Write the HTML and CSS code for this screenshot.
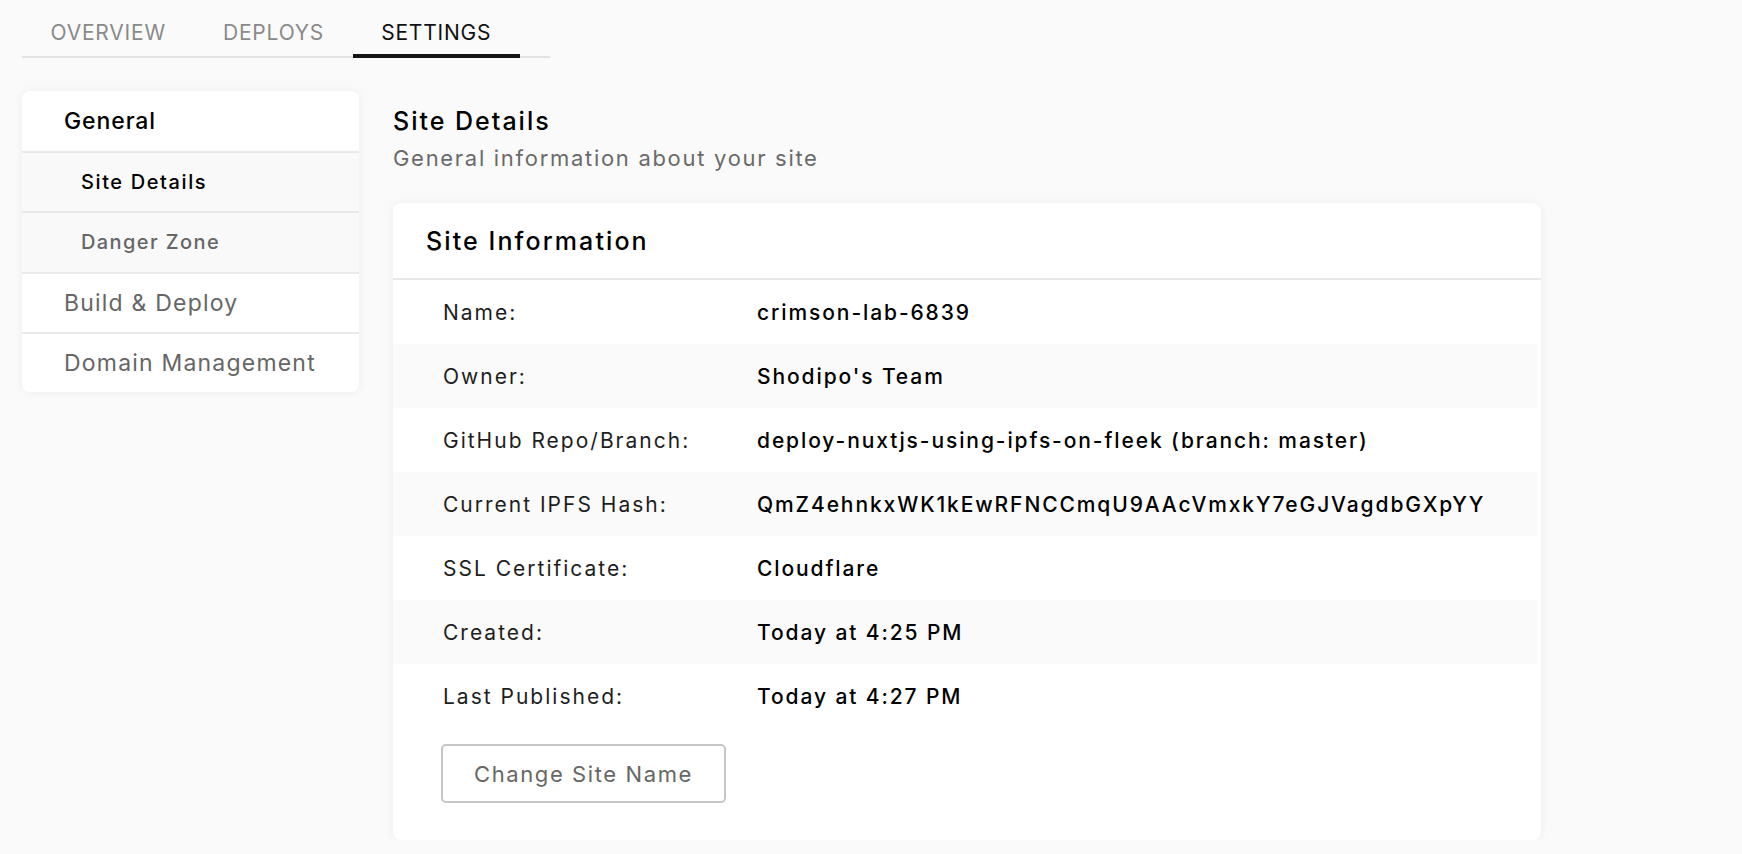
FILE: index.html
```html
<!DOCTYPE html>
<html lang="en">
<head>
<meta charset="utf-8">
<title>Site Settings</title>
<link rel="stylesheet" href="styles.css">
</head>
<body>
<div class="page">
  <nav class="tabs">
    <div class="tab">OVERVIEW</div>
    <div class="tab">DEPLOYS</div>
    <div class="tab active">SETTINGS</div>
  </nav>
  <div class="layout">
    <aside class="sidebar">
      <div class="side-item top active">General</div>
      <div class="side-item sub active">Site Details</div>
      <div class="side-item sub">Danger Zone</div>
      <div class="side-item top">Build &amp; Deploy</div>
      <div class="side-item top">Domain Management</div>
    </aside>
    <main class="main">
      <h1 class="title">Site Details</h1>
      <p class="subtitle">General information about your site</p>
      <section class="card">
        <div class="card-header">Site Information</div>
        <div class="rows">
          <div class="row"><span class="label">Name:</span><span class="value">crimson-lab-6839</span></div>
          <div class="row"><span class="label">Owner:</span><span class="value">Shodipo's Team</span></div>
          <div class="row"><span class="label">GitHub Repo/Branch:</span><span class="value">deploy-nuxtjs-using-ipfs-on-fleek (branch: master)</span></div>
          <div class="row"><span class="label">Current IPFS Hash:</span><span class="value">QmZ4ehnkxWK1kEwRFNCCmqU9AAcVmxkY7eGJVagdbGXpYY</span></div>
          <div class="row"><span class="label">SSL Certificate:</span><span class="value">Cloudflare</span></div>
          <div class="row"><span class="label">Created:</span><span class="value">Today at 4:25 PM</span></div>
          <div class="row"><span class="label">Last Published:</span><span class="value">Today at 4:27 PM</span></div>
        </div>
        <div class="actions">
          <button class="btn">Change Site Name</button>
        </div>
      </section>
    </main>
  </div>
</div>
</body>
</html>
```

FILE: styles.css
```css
* { box-sizing: border-box; }
html, body {
  margin: 0;
  padding: 0;
  background: #fafafa;
  font-family: "Inter", "Open Sans", sans-serif;
  color: #111;
}
.page {
  padding: 0 0 0 22px;
}
.tabs {
  display: inline-flex;
  padding-right: 30px;
  border-bottom: 2px solid #e2e2e2;
}
.tab {
  padding: 21px 28.5px 9px;
  font-size: 21px;
  line-height: 24px;
  letter-spacing: 0.8px;
  color: #8a8a8a;
  border-bottom: 4px solid transparent;
  margin-bottom: -2px;
}
.tab.active {
  color: #111;
  border-bottom-color: #141414;
}
.layout {
  display: flex;
  align-items: flex-start;
  gap: 34px;
  margin-top: 33px;
}
.sidebar {
  width: 337px;
  flex: none;
  background: #fff;
  border-radius: 8px;
  box-shadow: 0 0 10px rgba(0, 0, 0, 0.06);
  overflow: hidden;
}
.side-item {
  height: 60.2px;
  display: flex;
  align-items: center;
  border-top: 2px solid #e9e9eb;
}
.side-item:first-child { border-top: none; }
.side-item.top {
  padding-left: 42px;
  font-size: 23px;
  letter-spacing: 1.2px;
  color: #666;
}
.side-item.top.active {
  color: #000;
  font-weight: 500;
  letter-spacing: 0.9px;
}
.side-item.sub {
  padding-left: 59px;
  font-size: 20px;
  letter-spacing: 1.4px;
  background: #f9f9f9;
  color: #666;
  font-weight: 500;
}
.side-item.sub.active {
  color: #000;
  letter-spacing: 1.6px;
}
.main {
  width: 1148px;
  flex: none;
}
.title {
  margin: 0;
  padding-top: 15px;
  font-size: 25px;
  line-height: 30px;
  font-weight: 500;
  letter-spacing: 2px;
  color: #000;
}
.subtitle {
  margin: 7px 0 0;
  font-size: 22px;
  line-height: 30px;
  letter-spacing: 1.7px;
  color: #6a6a6a;
}
.card {
  margin-top: 30px;
  background: #fff;
  border-radius: 8px;
  box-shadow: 0 0 10px rgba(0, 0, 0, 0.06);
  padding-bottom: 37px;
}
.card-header {
  height: 77px;
  padding-left: 33px;
  display: flex;
  align-items: center;
  font-size: 25px;
  font-weight: 500;
  letter-spacing: 2.1px;
  color: #000;
  border-bottom: 2px solid #e8e8ea;
}
.rows {
  margin-right: 4px;
}
.row {
  display: grid;
  grid-template-columns: 314px 1fr;
  align-items: center;
  height: 64px;
  padding-left: 50px;
}
.row:nth-child(even) {
  background: #fafafa;
}
.label {
  font-size: 21px;
  letter-spacing: 2px;
  color: #1e1e1e;
}
.value {
  font-size: 21px;
  letter-spacing: 1.9px;
  font-weight: 500;
  color: #000;
}
.actions {
  padding: 16px 0 0 48px;
}
.btn {
  width: 285px;
  height: 59px;
  background: #fff;
  border: 2px solid #c6c6c6;
  border-radius: 5px;
  font-family: inherit;
  font-size: 22px;
  letter-spacing: 1.6px;
  color: #666;
  cursor: pointer;
}
```
